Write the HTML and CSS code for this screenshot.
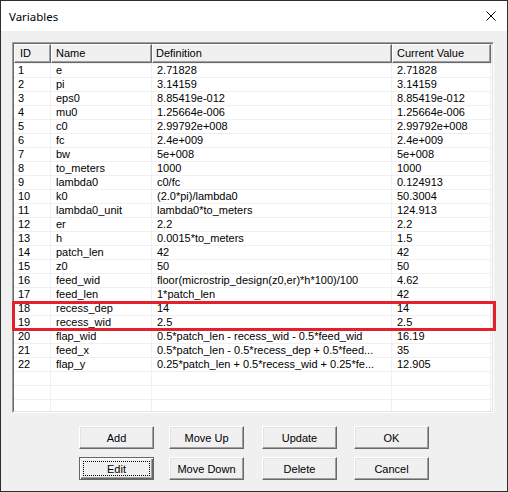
FILE: index.html
```html
<!DOCTYPE html>
<html>
<head>
<meta charset="utf-8">
<title>Variables</title>
<link rel="stylesheet" href="styles.css">
</head>
<body>
<div class="win">
  <div class="titlebar">
    <span class="title">Variables</span>
    <svg class="close" width="10" height="10" viewBox="0 0 10 10"><path d="M0.5 0.5 L9.5 9.5 M9.5 0.5 L0.5 9.5" stroke="#000" stroke-width="1" fill="none"/></svg>
  </div>
  <div class="content">
    <div class="listwrap">
      <div class="list">
        <div class="list-in">
          <div class="hdr">
            <div class="hc c-id">ID</div>
            <div class="hc c-name">Name</div>
            <div class="hc c-def">Definition</div>
            <div class="hc c-val">Current Value</div>
            <div class="hfill"></div>
          </div>
          <div class="rows">
            <div class="row"><div class="c c-id">1</div><div class="c c-name">e</div><div class="c c-def">2.71828</div><div class="c c-val">2.71828</div></div>
            <div class="row"><div class="c c-id">2</div><div class="c c-name">pi</div><div class="c c-def">3.14159</div><div class="c c-val">3.14159</div></div>
            <div class="row"><div class="c c-id">3</div><div class="c c-name">eps0</div><div class="c c-def">8.85419e-012</div><div class="c c-val">8.85419e-012</div></div>
            <div class="row"><div class="c c-id">4</div><div class="c c-name">mu0</div><div class="c c-def">1.25664e-006</div><div class="c c-val">1.25664e-006</div></div>
            <div class="row"><div class="c c-id">5</div><div class="c c-name">c0</div><div class="c c-def">2.99792e+008</div><div class="c c-val">2.99792e+008</div></div>
            <div class="row"><div class="c c-id">6</div><div class="c c-name">fc</div><div class="c c-def">2.4e+009</div><div class="c c-val">2.4e+009</div></div>
            <div class="row"><div class="c c-id">7</div><div class="c c-name">bw</div><div class="c c-def">5e+008</div><div class="c c-val">5e+008</div></div>
            <div class="row"><div class="c c-id">8</div><div class="c c-name">to_meters</div><div class="c c-def">1000</div><div class="c c-val">1000</div></div>
            <div class="row"><div class="c c-id">9</div><div class="c c-name">lambda0</div><div class="c c-def">c0/fc</div><div class="c c-val">0.124913</div></div>
            <div class="row"><div class="c c-id">10</div><div class="c c-name">k0</div><div class="c c-def">(2.0*pi)/lambda0</div><div class="c c-val">50.3004</div></div>
            <div class="row"><div class="c c-id">11</div><div class="c c-name">lambda0_unit</div><div class="c c-def">lambda0*to_meters</div><div class="c c-val">124.913</div></div>
            <div class="row"><div class="c c-id">12</div><div class="c c-name">er</div><div class="c c-def">2.2</div><div class="c c-val">2.2</div></div>
            <div class="row"><div class="c c-id">13</div><div class="c c-name">h</div><div class="c c-def">0.0015*to_meters</div><div class="c c-val">1.5</div></div>
            <div class="row"><div class="c c-id">14</div><div class="c c-name">patch_len</div><div class="c c-def">42</div><div class="c c-val">42</div></div>
            <div class="row"><div class="c c-id">15</div><div class="c c-name">z0</div><div class="c c-def">50</div><div class="c c-val">50</div></div>
            <div class="row"><div class="c c-id">16</div><div class="c c-name">feed_wid</div><div class="c c-def">floor(microstrip_design(z0,er)*h*100)/100</div><div class="c c-val">4.62</div></div>
            <div class="row"><div class="c c-id">17</div><div class="c c-name">feed_len</div><div class="c c-def">1*patch_len</div><div class="c c-val">42</div></div>
            <div class="row"><div class="c c-id">18</div><div class="c c-name">recess_dep</div><div class="c c-def">14</div><div class="c c-val">14</div></div>
            <div class="row"><div class="c c-id">19</div><div class="c c-name">recess_wid</div><div class="c c-def">2.5</div><div class="c c-val">2.5</div></div>
            <div class="row"><div class="c c-id">20</div><div class="c c-name">flap_wid</div><div class="c c-def">0.5*patch_len - recess_wid - 0.5*feed_wid</div><div class="c c-val">16.19</div></div>
            <div class="row"><div class="c c-id">21</div><div class="c c-name">feed_x</div><div class="c c-def">0.5*patch_len - 0.5*recess_dep + 0.5*feed...</div><div class="c c-val">35</div></div>
            <div class="row"><div class="c c-id">22</div><div class="c c-name">flap_y</div><div class="c c-def">0.25*patch_len + 0.5*recess_wid + 0.25*fe...</div><div class="c c-val">12.905</div></div>
            <div class="row"><div class="c c-id"></div><div class="c c-name"></div><div class="c c-def"></div><div class="c c-val"></div></div>
            <div class="row"><div class="c c-id"></div><div class="c c-name"></div><div class="c c-def"></div><div class="c c-val"></div></div>
            <div class="row"><div class="c c-id"></div><div class="c c-name"></div><div class="c c-def"></div><div class="c c-val"></div></div>
          </div>
        </div>
      </div>
      <div class="highlight"></div>
    </div>
    <div class="buttons">
      <button class="btn">Add</button>
      <button class="btn">Move Up</button>
      <button class="btn">Update</button>
      <button class="btn">OK</button>
      <button class="btn btn-default"><span class="focus">Edit</span></button>
      <button class="btn">Move Down</button>
      <button class="btn">Delete</button>
      <button class="btn">Cancel</button>
    </div>
  </div>
</div>
</body>
</html>
```

FILE: styles.css
```css
* { box-sizing: border-box; }
html, body { margin: 0; padding: 0; background: #ffffff; }
body { font-family: "Liberation Sans", Arial, sans-serif; font-size: 11px; color: #000; }

.win {
  width: 508px;
  height: 492px;
  border: 1px solid #2e2e2e;
  background: #f0f0f0;
  display: flex;
  flex-direction: column;
  overflow: hidden;
}

.titlebar {
  height: 30px;
  background: #ffffff;
  display: flex;
  align-items: center;
  justify-content: space-between;
  padding: 0 11px 0 8px;
  flex: none;
}
.title {
  font-family: "Noto Sans", "Open Sans", sans-serif;
  font-size: 11.5px;
  color: #000;
  padding-top: 1px;
}
.close { display: block; margin-top: 0px; }

.content {
  flex: 1;
  padding: 11px 13px 0 11px;
}

.listwrap { position: relative; width: 482px; }

.list {
  width: 482px;
  height: 371px;
  border: 1px solid;
  border-color: #a0a0a0 #ffffff #ffffff #a0a0a0;
}
.list-in {
  width: 100%;
  height: 100%;
  border: 1px solid;
  border-color: #696969 #e3e3e3 #e3e3e3 #696969;
  background: #ffffff;
  overflow: hidden;
}

.hdr {
  display: flex;
  height: 19px;
}
.hc {
  height: 19px;
  background: #f0f0f0;
  border-top: 1px solid #ffffff;
  border-left: 1px solid #ffffff;
  border-right: 1px solid #696969;
  border-bottom: 1px solid #696969;
  box-shadow: inset -1px -1px 0 #a0a0a0;
  padding-left: 4px;
  line-height: 16px;
  white-space: nowrap;
  overflow: hidden;
}
.hc.c-id { padding-left: 5px; }
.hc.c-def { padding-left: 3px; }
.hfill { flex: 1; background: #f0f0f0; }

.c-id { width: 37px; flex: none; }
.c-name { width: 101px; flex: none; }
.c-def { width: 240px; flex: none; }
.c-val { width: 99px; flex: none; }

.row {
  display: flex;
  height: 14px;
  border-top: 1px solid #f0f0f0;
}
.c {
  height: 13px;
  line-height: 13px;
  border-right: 1px solid #f0f0f0;
  padding-left: 5px;
  white-space: nowrap;
  overflow: hidden;
}
.c.c-id { padding-left: 4px; }

.highlight {
  position: absolute;
  left: 0;
  top: 259px;
  width: 484px;
  height: 30px;
  border: 3px solid #e3202b;
  pointer-events: none;
}

.buttons {
  margin-top: 13px;
  margin-left: 67px;
  display: grid;
  grid-template-columns: 90px 93px 92px 75px;
  row-gap: 8px;
}
.btn {
  width: 75px;
  height: 23px;
  padding: 0;
  margin: 0;
  font-family: "Liberation Sans", Arial, sans-serif;
  font-size: 11px;
  color: #000;
  background: #f0f0f0;
  border: 1px solid;
  border-color: #ffffff #696969 #696969 #ffffff;
  box-shadow: inset -1px -1px 0 #a0a0a0, inset 1px 1px 0 #e3e3e3;
  display: flex;
  align-items: center;
  justify-content: center;
}
.btn-default {
  border: 1px solid #646464;
  box-shadow: inset 1px 1px 0 #ffffff, inset -1px -1px 0 #696969, inset -2px -2px 0 #a0a0a0;
  position: relative;
}
.focus {
  display: flex;
  align-items: center;
  justify-content: center;
  width: 67px;
  height: 15px;
  border: 1px dotted #000;
}
```
